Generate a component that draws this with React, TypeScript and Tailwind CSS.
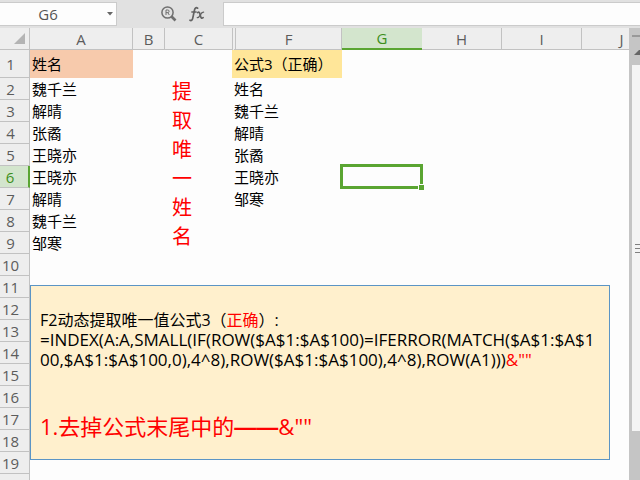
import { clsx } from "clsx";

type Column = { id: string; width: string };

const COLUMNS: Column[] = [
  { id: "A", width: "w-[103px]" },
  { id: "B", width: "w-8" },
  { id: "C", width: "w-[67px]" },
  { id: "F", width: "w-[110px]" },
  { id: "G", width: "w-20" },
  { id: "H", width: "w-20" },
  { id: "I", width: "w-20" },
  { id: "J", width: "w-20" },
];

const CELLS: Record<string, string> = {
  A1: "姓名",
  A2: "魏千兰",
  A3: "解晴",
  A4: "张矞",
  A5: "王晓亦",
  A6: "王晓亦",
  A7: "解晴",
  A8: "魏千兰",
  A9: "邹寒",
  F1: "公式3（正确）",
  F2: "姓名",
  F3: "魏千兰",
  F4: "解晴",
  F5: "张矞",
  F6: "王晓亦",
  F7: "邹寒",
};

const ROWS = Array.from({ length: 20 }, (_, i) => i + 1);
const ACTIVE_COLUMN = "G";
const ACTIVE_ROW = 6;

function FormulaBar() {
  return (
    <div className="flex h-7 shrink-0 items-center bg-[#e1e1e1] pb-[1px]">
      <div className="flex h-6 w-[117px] shrink-0 items-center border border-l-0 border-[#cbcbcb] bg-[#fdfdfd]">
        <input
          aria-label="名称框"
          defaultValue="G6"
          className="w-24 min-w-0 bg-transparent text-center text-[15px] leading-5 text-[#555555] outline-none"
        />
        <button type="button" aria-label="展开名称框" className="flex flex-1 justify-end pr-[3px]">
          <svg width="6" height="4" viewBox="0 0 6 4" fill="#666666">
            <path d="M0 0h6L3 3.5z" />
          </svg>
        </button>
      </div>
      <div className="flex flex-1 items-center">
        <div className="flex w-[106px] shrink-0 items-center justify-end gap-3 pr-[18px]">
          <button type="button" aria-label="查找">
            <svg width="16" height="16" viewBox="0 0 16 16" fill="none" stroke="#707070">
              <circle cx="6.5" cy="6.5" r="5.6" strokeWidth="1.5" />
              <path d="M5 9V4h1.8a1.2 1.2 0 0 1 0 2.6H5M6.8 6.6 8.3 9" strokeWidth="1" />
              <path d="m10.5 10.5 4 4" strokeWidth="2.6" />
            </svg>
          </button>
          <button type="button" aria-label="插入函数">
            <svg width="16" height="16" viewBox="0 0 16 16" fill="none" stroke="#636363" strokeLinecap="round">
              <path d="M8.6 2.2C7 1 5.9 2.2 5.5 4L3.7 12.4C3.3 14.2 2.2 15 1 14.2" strokeWidth="1.7" />
              <path d="M2.8 6h4.4" strokeWidth="1.3" />
              <path d="M8.6 6.6c1.4-1 2 0 2.4 1.6l.7 2.6c.4 1.4 1.2 1.8 2.4.8" strokeWidth="1.7" />
              <path d="M14.6 6.2c-1.6-.2-2.6 1.4-3.4 2.9s-1.6 2.8-3 2.6" strokeWidth="1.2" />
            </svg>
          </button>
        </div>
        <input
          aria-label="编辑栏"
          className="h-6 min-w-0 flex-1 border border-r-0 border-[#cbcbcb] bg-[#fdfdfd] px-2 text-base outline-none"
        />
      </div>
    </div>
  );
}

function Selection() {
  return (
    <div className="absolute -top-[2px] -right-px -bottom-px -left-[2px] border-3 border-[#5aa532]">
      <span className="absolute -right-[5px] -bottom-[5px] size-[7px] border border-[#fdfdfd] bg-[#5aa532]" />
    </div>
  );
}

function Grid() {
  return (
    <table className="w-full min-w-[662px] table-fixed border-separate border-spacing-0 text-[15px] leading-5">
      <colgroup>
        <col className="w-[30px]" />
        {COLUMNS.map((col) => (
          <col key={col.id} className={col.width} />
        ))}
        <col />
      </colgroup>
      <thead>
        <tr className="h-[22px]">
          <th className="border-r border-b border-[#c2c2c2] bg-[#eeeeee] p-0">
            <svg className="ml-auto mr-1" width="11" height="11" viewBox="0 0 11 11" fill="#b4b4b4">
              <path d="M11 0v11H0z" />
            </svg>
          </th>
          {COLUMNS.map((col) => (
            <th
              key={col.id}
              scope="col"
              className={clsx(
                "p-0 font-normal",
                col.id === ACTIVE_COLUMN
                  ? "border-b-2 border-[#5aa532] bg-[#d3e5cd] text-[#3c8f1c]"
                  : "border-b border-[#c2c2c2] bg-[#eeeeee] text-[#5c5c5c]",
                // D and E are hidden, so F starts with a double rule
                col.id === "F" && "border-l-4 [border-left-style:double]",
                col.id !== "C" && col.id !== ACTIVE_COLUMN && "border-r",
              )}
            >
              {col.id}
            </th>
          ))}
          <th className="border-b border-[#c2c2c2] bg-[#eeeeee] p-0" />
        </tr>
      </thead>
      <tbody>
        {ROWS.map((row) => (
          <tr key={row} className={row === 1 ? "h-7" : "h-[22px]"}>
            <th
              scope="row"
              className={clsx(
                "border-b border-b-[#c2c2c2] p-0 pr-2 font-normal",
                row === ACTIVE_ROW
                  ? "border-r-2 border-r-[#5aa532] bg-[#d3e5cd] text-[#3c8f1c]"
                  : "border-r border-r-[#c2c2c2] bg-[#eeeeee] text-[#5c5c5c]",
              )}
            >
              {row}
            </th>
            {COLUMNS.map((col) => (
              <td
                key={col.id}
                className={clsx(
                  "relative p-0 pl-[2px] whitespace-nowrap text-black",
                  row === 1 && col.id === "A" && "bg-[#f7caac]",
                  row === 1 && col.id === "F" && "bg-[#ffe699]",
                )}
              >
                {CELLS[`${col.id}${row}`]}
                {col.id === ACTIVE_COLUMN && row === ACTIVE_ROW && <Selection />}
              </td>
            ))}
            <td className="p-0" />
          </tr>
        ))}
      </tbody>
    </table>
  );
}

// Floating text boxes that sit on top of the cells
function VerticalTitle() {
  return (
    <p className="absolute top-[49px] left-[172px] w-5 text-xl leading-[29px] break-all text-[#ff0000]">
      提取唯一姓名
    </p>
  );
}

function FormulaNote() {
  return (
    <div className="absolute top-[257px] left-[30px] h-[175px] w-[580px] border border-[#5b95c5] bg-[#fff0cd] px-[9px] py-6 whitespace-nowrap">
      <p className="text-base leading-5 text-black">
        F2动态提取唯一值公式3（<span className="text-[#ff0000]">正确</span>）:
      </p>
      <p className="text-[17px] leading-5 text-black">
        =INDEX(A:A,SMALL(IF(ROW($A$1:$A$100)=IFERROR(MATCH($A$1:$A$1
        <br />
        00,$A$1:$A$100,0),4^8),ROW($A$1:$A$100),4^8),ROW(A1)))<span className="text-[#ff0000]">&amp;""</span>
      </p>
      <p className="mt-10 text-[22px] leading-8 text-[#ff0000]">
        1.去掉公式末尾中的<span className="font-['Liberation_Sans',sans-serif] font-bold">——</span>&amp;""
      </p>
    </div>
  );
}

function ScrollBar() {
  return (
    <div className="flex w-[11px] shrink-0 flex-col bg-[#c5c5c5] pl-[3px]">
      <div className="flex h-[37px] shrink-0 flex-col items-end pt-[7px]">
        <span className="h-[2px] w-full bg-[#999999]" />
        <svg className="mt-[13px]" width="6" height="5" viewBox="0 0 6 5" fill="#666666">
          <path d="M0 5 5 0h1v5z" />
        </svg>
      </div>
      <div className="flex flex-1 flex-col items-end justify-center gap-[3px] bg-[#f4f4f4]">
        <span className="h-px w-[5px] bg-[#808080]" />
        <span className="h-px w-[5px] bg-[#808080]" />
        <span className="h-px w-[5px] bg-[#808080]" />
      </div>
      <div className="h-[49px] shrink-0" />
    </div>
  );
}

export default function App() {
  return (
    <div className="flex h-screen flex-col overflow-hidden bg-[#fdfdfd] font-['Open_Sans','Noto_Sans_CJK_SC',sans-serif]">
      <FormulaBar />
      <div className="flex min-h-0 flex-1">
        <main className="relative min-w-0 flex-1 overflow-hidden">
          <Grid />
          <VerticalTitle />
          <FormulaNote />
        </main>
        <ScrollBar />
      </div>
    </div>
  );
}
